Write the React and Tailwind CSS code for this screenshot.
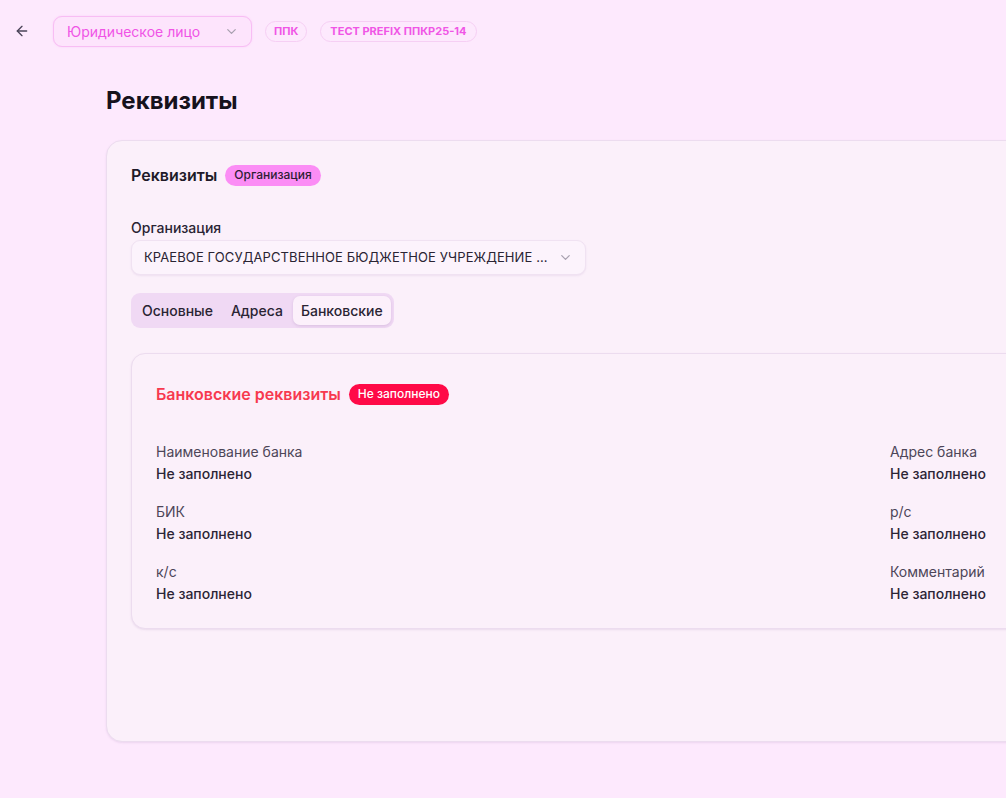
import React from "react";
import { ArrowLeft, ChevronDown } from "lucide-react";

const fields = [
  ["Наименование банка", "Адрес банка"],
  ["БИК", "р/с"],
  ["к/с", "Комментарий"],
];

function Field({ label }) {
  return (
    <div className="flex flex-col">
      <div className="text-[14px] leading-[20px] text-[#4d4658]">{label}</div>
      <div className="mt-[2px] text-[14px] leading-[20px] font-medium text-[#2b2536]">Не заполнено</div>
    </div>
  );
}

export default function App() {
  return (
    <div
      className="min-h-screen w-full overflow-hidden bg-[#fde9fd] text-[#1c1626]"
      style={{ fontFamily: "Inter, 'Noto Sans', sans-serif" }}
    >
      <div className="flex items-center h-[62px] pl-[14px]">
        <button className="w-[16px] h-[16px] flex items-center justify-center text-[#4a4458]">
          <ArrowLeft size={16} strokeWidth={2} />
        </button>
        <div className="ml-[23px] w-[199px] h-[31px] rounded-[9px] border border-[#f8bdf4] bg-[#fde4fc] shadow-[0_0_2px_rgba(245,150,240,0.35)] flex items-center justify-between pl-[13px] pr-[12px]">
          <span className="text-[14px] text-[#f054e6]">Юридическое лицо</span>
          <ChevronDown size={15} className="text-[#a8a0b0]" />
        </div>
        <span className="ml-[13px] h-[21px] px-[8px] rounded-full border border-[#f6cff4] flex items-center text-[11px] font-bold text-[#f056e6]">ППК</span>
        <span className="ml-[13px] h-[21px] px-[9px] rounded-full border border-[#f6cff4] flex items-center text-[11px] font-bold text-[#f056e6]">ТЕСТ PREFIX ППКР25-14</span>
      </div>

      <div className="pl-[106px]">
        <h1 className="mt-[23px] text-[24px] leading-[32px] font-bold text-[#16121d]">Реквизиты</h1>

        <div className="mt-[23px] w-[1544px] h-[602px] rounded-[16px] border border-[#ecdcef] bg-[#fbf0fa] shadow-[0_1px_2px_rgba(150,110,170,0.15)] pl-[24px] pt-[22px]">
          <div className="flex items-center gap-[8px]">
            <span className="text-[16px] font-semibold text-[#201a28]">Реквизиты</span>
            <span className="h-[21px] px-[9px] rounded-full bg-[#fb8df5] flex items-center text-[12px] font-medium text-[#2c1e33]">Организация</span>
          </div>

          <div className="mt-[31px] text-[14px] font-medium text-[#2a2433] leading-[20px]">Организация</div>
          <div className="mt-[2px] w-[455px] h-[35px] rounded-[9px] border border-[#f0e2f2] bg-[#fcf3fc] shadow-[0_1px_2px_rgba(150,110,170,0.12)] flex items-center justify-between pl-[12px] pr-[12px]">
            <span className="text-[13px] text-[#2a2433] tracking-[0.1px]">КРАЕВОЕ ГОСУДАРСТВЕННОЕ БЮДЖЕТНОЕ УЧРЕЖДЕНИЕ ...</span>
            <ChevronDown size={15} className="text-[#a8a0b0]" />
          </div>

          <div className="mt-[18px] inline-flex items-center h-[35px] rounded-[9px] bg-[#f0d9f4] p-[3px] gap-[2px]">
            <span className="h-[29px] px-[8px] flex items-center text-[14px] font-medium text-[#2a2433]">Основные</span>
            <span className="h-[29px] px-[8px] flex items-center text-[14px] font-medium text-[#2a2433]">Адреса</span>
            <span className="h-[29px] px-[8px] flex items-center rounded-[7px] bg-[#fcf0fb] shadow-[0_1px_3px_rgba(150,110,170,0.25)] text-[14px] font-medium text-[#2a2433]">Банковские</span>
          </div>

          <div className="mt-[25px] w-[1494px] h-[276px] rounded-[14px] border border-[#ecdcef] bg-[#fbf0fa] shadow-[0_1px_2px_rgba(150,110,170,0.15)] pl-[24px] pt-[28px]">
            <div className="flex items-center gap-[8px]">
              <span className="text-[16px] font-semibold text-[#f7394f]">Банковские реквизиты</span>
              <span className="h-[21px] px-[9px] rounded-full bg-[#ff0a47] flex items-center text-[12px] font-medium text-white">Не заполнено</span>
            </div>
            <div className="mt-[36px] grid grid-cols-[734px_1fr] gap-y-[18px]">
              {fields.map(([a, b]) => (
                <React.Fragment key={a}>
                  <Field label={a} />
                  <Field label={b} />
                </React.Fragment>
              ))}
            </div>
          </div>
        </div>
      </div>
    </div>
  );
}
